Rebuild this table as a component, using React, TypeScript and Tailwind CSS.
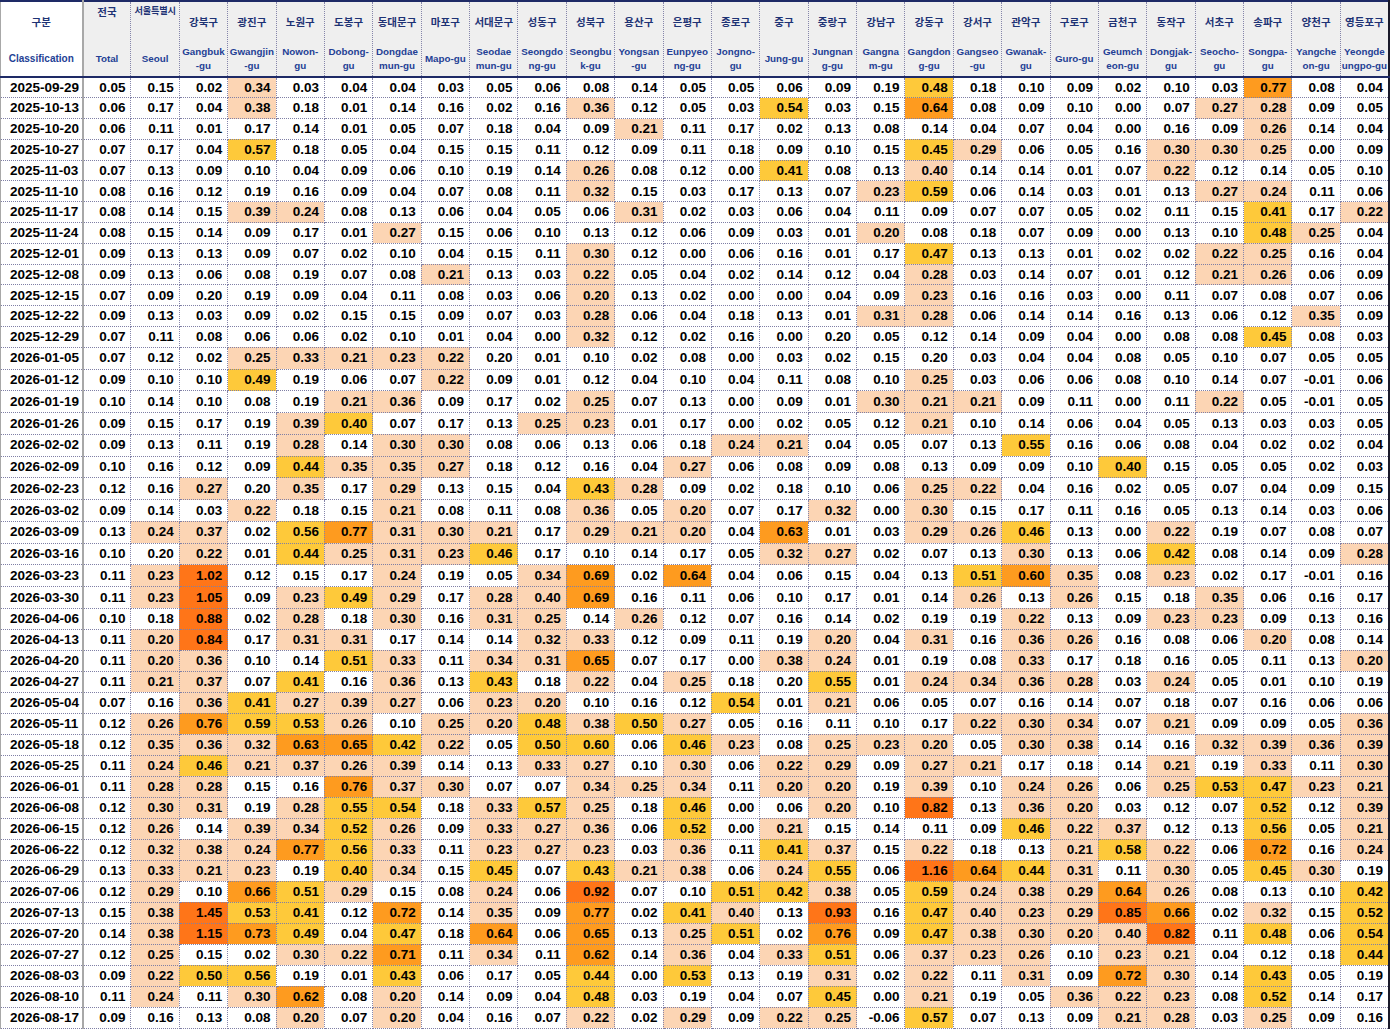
import React from "react";

type Head = { ko: string; en: string[]; top?: boolean };

const HEAD: Head[] = [
  { ko: "전국", en: ["Total"], top: true },
  { ko: "서울특별시", en: ["Seoul"], top: true },
  { ko: "강북구", en: ["Gangbuk", "-gu"] },
  { ko: "광진구", en: ["Gwangjin", "-gu"] },
  { ko: "노원구", en: ["Nowon-", "gu"] },
  { ko: "도봉구", en: ["Dobong-", "gu"] },
  { ko: "동대문구", en: ["Dongdae", "mun-gu"] },
  { ko: "마포구", en: ["Mapo-gu"] },
  { ko: "서대문구", en: ["Seodae", "mun-gu"] },
  { ko: "성동구", en: ["Seongdo", "ng-gu"] },
  { ko: "성북구", en: ["Seongbu", "k-gu"] },
  { ko: "용산구", en: ["Yongsan", "-gu"] },
  { ko: "은평구", en: ["Eunpyeo", "ng-gu"] },
  { ko: "종로구", en: ["Jongno-", "gu"] },
  { ko: "중구", en: ["Jung-gu"] },
  { ko: "중랑구", en: ["Jungnan", "g-gu"] },
  { ko: "강남구", en: ["Gangna", "m-gu"] },
  { ko: "강동구", en: ["Gangdon", "g-gu"] },
  { ko: "강서구", en: ["Gangseo", "-gu"] },
  { ko: "관악구", en: ["Gwanak-", "gu"] },
  { ko: "구로구", en: ["Guro-gu"] },
  { ko: "금천구", en: ["Geumch", "eon-gu"] },
  { ko: "동작구", en: ["Dongjak-", "gu"] },
  { ko: "서초구", en: ["Seocho-", "gu"] },
  { ko: "송파구", en: ["Songpa-", "gu"] },
  { ko: "양천구", en: ["Yangche", "on-gu"] },
  { ko: "영등포구", en: ["Yeongde", "ungpo-gu"] },
];

// a trailing "-" marks a value whose colour sits one step lower than its rounded value suggests
const DATA = `
2025-09-29|0.05 0.15 0.02 0.34 0.03 0.04 0.04 0.03 0.05 0.06 0.08 0.14 0.05 0.05 0.06 0.09 0.19 0.48 0.18 0.10 0.09 0.02 0.10 0.03 0.77 0.08 0.04
2025-10-13|0.06 0.17 0.04 0.38 0.18 0.01 0.14 0.16 0.02 0.16 0.36 0.12 0.05 0.03 0.54 0.03 0.15 0.64 0.08 0.09 0.10 0.00 0.07 0.27 0.28 0.09 0.05
2025-10-20|0.06 0.11 0.01 0.17 0.14 0.01 0.05 0.07 0.18 0.04 0.09 0.21 0.11 0.17 0.02 0.13 0.08 0.14 0.04 0.07 0.04 0.00 0.16 0.09 0.26 0.14 0.04
2025-10-27|0.07 0.17 0.04 0.57 0.18 0.05 0.04 0.15 0.15 0.11 0.12 0.09 0.11 0.18 0.09 0.10 0.15 0.45 0.29 0.06 0.05 0.16 0.30 0.30 0.25 0.00 0.09
2025-11-03|0.07 0.13 0.09 0.10 0.04 0.09 0.06 0.10 0.19 0.14 0.26 0.08 0.12 0.00 0.41 0.08 0.13 0.40- 0.14 0.14 0.01 0.07 0.22 0.12 0.14 0.05 0.10
2025-11-10|0.08 0.16 0.12 0.19 0.16 0.09 0.04 0.07 0.08 0.11 0.32 0.15 0.03 0.17 0.13 0.07 0.23 0.59 0.06 0.14 0.03 0.01 0.13 0.27 0.24 0.11 0.06
2025-11-17|0.08 0.14 0.15 0.39 0.24 0.08 0.13 0.06 0.04 0.05 0.06 0.31 0.02 0.03 0.06 0.04 0.11 0.09 0.07 0.07 0.05 0.02 0.11 0.15 0.41 0.17 0.22
2025-11-24|0.08 0.15 0.14 0.09 0.17 0.01 0.27 0.15 0.06 0.10 0.13 0.12 0.06 0.09 0.03 0.01 0.20 0.08 0.18 0.07 0.09 0.00 0.13 0.10 0.48 0.25 0.04
2025-12-01|0.09 0.13 0.13 0.09 0.07 0.02 0.10 0.04 0.15 0.11 0.30 0.12 0.00 0.06 0.16 0.01 0.17 0.47 0.13 0.13 0.01 0.02 0.02 0.22 0.25 0.16 0.04
2025-12-08|0.09 0.13 0.06 0.08 0.19 0.07 0.08 0.21 0.13 0.03 0.22 0.05 0.04 0.02 0.14 0.12 0.04 0.28 0.03 0.14 0.07 0.01 0.12 0.21 0.26 0.06 0.09
2025-12-15|0.07 0.09 0.20- 0.19 0.09 0.04 0.11 0.08 0.03 0.06 0.20 0.13 0.02 0.00 0.00 0.04 0.09 0.23 0.16 0.16 0.03 0.00 0.11 0.07 0.08 0.07 0.06
2025-12-22|0.09 0.13 0.03 0.09 0.02 0.15 0.15 0.09 0.07 0.03 0.28 0.06 0.04 0.18 0.13 0.01 0.31 0.28 0.06 0.14 0.14 0.16 0.13 0.06 0.12 0.35 0.09
2025-12-29|0.07 0.11 0.08 0.06 0.06 0.02 0.10 0.01 0.04 0.00 0.32 0.12 0.02 0.16 0.00 0.20- 0.05 0.12 0.14 0.09 0.04 0.00 0.08 0.08 0.45 0.08 0.03
2026-01-05|0.07 0.12 0.02 0.25 0.33 0.21 0.23 0.22 0.20- 0.01 0.10 0.02 0.08 0.00 0.03 0.02 0.15 0.20- 0.03 0.04 0.04 0.08 0.05 0.10 0.07 0.05 0.05
2026-01-12|0.09 0.10 0.10 0.49 0.19 0.06 0.07 0.22 0.09 0.01 0.12 0.04 0.10 0.04 0.11 0.08 0.10 0.25 0.03 0.06 0.06 0.08 0.10 0.14 0.07 -0.01 0.06
2026-01-19|0.10 0.14 0.10 0.08 0.19 0.21 0.36 0.09 0.17 0.02 0.25 0.07 0.13 0.00 0.09 0.01 0.30 0.21 0.21 0.09 0.11 0.00 0.11 0.22 0.05 -0.01 0.05
2026-01-26|0.09 0.15 0.17 0.19 0.39 0.40 0.07 0.17 0.13 0.25 0.23 0.01 0.17 0.00 0.02 0.05 0.12 0.21 0.10 0.14 0.06 0.04 0.05 0.13 0.03 0.03 0.05
2026-02-02|0.09 0.13 0.11 0.19 0.28 0.14 0.30 0.30 0.08 0.06 0.13 0.06 0.18 0.24 0.21 0.04 0.05 0.07 0.13 0.55 0.16 0.06 0.08 0.04 0.02 0.02 0.04
2026-02-09|0.10 0.16 0.12 0.09 0.44 0.35 0.35 0.27 0.18 0.12 0.16 0.04 0.27 0.06 0.08 0.09 0.08 0.13 0.09 0.09 0.10 0.40 0.15 0.05 0.05 0.02 0.03
2026-02-23|0.12 0.16 0.27 0.20- 0.35 0.17 0.29 0.13 0.15 0.04 0.43 0.28 0.09 0.02 0.18 0.10 0.06 0.25 0.22 0.04 0.16 0.02 0.05 0.07 0.04 0.09 0.15
2026-03-02|0.09 0.14 0.03 0.22 0.18 0.15 0.21 0.08 0.11 0.08 0.36 0.05 0.20 0.07 0.17 0.32 0.00 0.30 0.15 0.17 0.11 0.16 0.05 0.13 0.14 0.03 0.06
2026-03-09|0.13 0.24 0.37 0.02 0.56 0.77 0.31 0.30 0.21 0.17 0.29 0.21 0.20 0.04 0.63 0.01 0.03 0.29 0.26 0.46 0.13 0.00 0.22 0.19 0.07 0.08 0.07
2026-03-16|0.10 0.20- 0.22 0.01 0.44 0.25 0.31 0.23 0.46 0.17 0.10 0.14 0.17 0.05 0.32 0.27 0.02 0.07 0.13 0.30 0.13 0.06 0.42 0.08 0.14 0.09 0.28
2026-03-23|0.11 0.23 1.02 0.12 0.15 0.17 0.24 0.19 0.05 0.34 0.69 0.02 0.64 0.04 0.06 0.15 0.04 0.13 0.51 0.60 0.35 0.08 0.23 0.02 0.17 -0.01 0.16
2026-03-30|0.11 0.23 1.05 0.09 0.23 0.49 0.29 0.17 0.28 0.40- 0.69 0.16 0.11 0.06 0.10 0.17 0.01 0.14 0.26 0.13 0.26 0.15 0.18 0.35 0.06 0.16 0.17
2026-04-06|0.10 0.18 0.88 0.02 0.28 0.18 0.30 0.16 0.31 0.25 0.14 0.26 0.12 0.07 0.16 0.14 0.02 0.19 0.19 0.22 0.13 0.09 0.23 0.23 0.09 0.13 0.16
2026-04-13|0.11 0.20 0.84 0.17 0.31 0.31 0.17 0.14 0.14 0.32 0.33 0.12 0.09 0.11 0.19 0.20 0.04 0.31 0.16 0.36 0.26 0.16 0.08 0.06 0.20 0.08 0.14
2026-04-20|0.11 0.20 0.36 0.10 0.14 0.51 0.33 0.11 0.34 0.31 0.65 0.07 0.17 0.00 0.38 0.24 0.01 0.19 0.08 0.33 0.17 0.18 0.16 0.05 0.11 0.13 0.20
2026-04-27|0.11 0.21 0.37 0.07 0.41 0.16 0.36 0.13 0.43 0.18 0.22 0.04 0.25 0.18 0.20- 0.55 0.01 0.24 0.34 0.36 0.28 0.03 0.24 0.05 0.01 0.10 0.19
2026-05-04|0.07 0.16 0.36 0.41 0.27 0.39 0.27 0.06 0.23 0.20 0.10 0.16 0.12 0.54 0.01 0.21 0.06 0.05 0.07 0.16 0.14 0.07 0.18 0.07 0.16 0.06 0.06
2026-05-11|0.12 0.26 0.76 0.59 0.53 0.26 0.10 0.25 0.20 0.48 0.38 0.50 0.27 0.05 0.16 0.11 0.10 0.17 0.22 0.30 0.34 0.07 0.21 0.09 0.09 0.05 0.36
2026-05-18|0.12 0.35 0.36 0.32 0.63 0.65 0.42 0.22 0.05 0.50 0.60- 0.06 0.46 0.23 0.08 0.25 0.23 0.20 0.05 0.30 0.38 0.14 0.16 0.32 0.39 0.36 0.39
2026-05-25|0.11 0.24 0.46 0.21 0.37 0.26 0.39 0.14 0.13 0.33 0.27 0.10 0.30 0.06 0.22 0.29 0.09 0.27 0.21 0.17 0.18 0.14 0.21 0.19 0.33 0.11 0.30
2026-06-01|0.11 0.28 0.28 0.15 0.16 0.76 0.37 0.30 0.07 0.07 0.34 0.25 0.34 0.11 0.20 0.20 0.19 0.39 0.10 0.24 0.26 0.06 0.25 0.53 0.47 0.23 0.21
2026-06-08|0.12 0.30 0.31 0.19 0.28 0.55 0.54 0.18 0.33 0.57 0.25 0.18 0.46 0.00 0.06 0.20 0.10 0.82 0.13 0.36 0.20 0.03 0.12 0.07 0.52 0.12 0.39
2026-06-15|0.12 0.26 0.14 0.39 0.34 0.52 0.26 0.09 0.33 0.27 0.36 0.06 0.52 0.00 0.21 0.15 0.14 0.11 0.09 0.46 0.22 0.37 0.12 0.13 0.56 0.05 0.21
2026-06-22|0.12 0.32 0.38 0.24 0.77 0.56 0.33 0.11 0.23 0.27 0.23 0.03 0.36 0.11 0.41 0.37 0.15 0.22 0.18 0.13 0.21 0.58 0.22 0.06 0.72 0.16 0.24
2026-06-29|0.13 0.33 0.21 0.23 0.19 0.40 0.34 0.15 0.45 0.07 0.43 0.21 0.38 0.06 0.24 0.55 0.06 1.16 0.64 0.44 0.31 0.11 0.30 0.05 0.45 0.30 0.19
2026-07-06|0.12 0.29 0.10 0.66 0.51 0.29 0.15 0.08 0.24 0.06 0.92 0.07 0.10 0.51 0.42 0.38 0.05 0.59 0.24 0.38 0.29 0.64 0.26 0.08 0.13 0.10 0.42
2026-07-13|0.15 0.38 1.45 0.53 0.41 0.12 0.72 0.14 0.35 0.09 0.77 0.02 0.41 0.40- 0.13 0.93 0.16 0.47 0.40- 0.23 0.29 0.85 0.66 0.02 0.32 0.15 0.52
2026-07-20|0.14 0.38 1.15 0.73 0.49 0.04 0.47 0.18 0.64 0.06 0.65 0.13 0.25 0.51 0.02 0.76 0.09 0.47 0.38 0.30 0.20 0.40- 0.82 0.11 0.48 0.06 0.54
2026-07-27|0.12 0.25 0.15 0.02 0.30 0.22 0.71 0.11 0.34 0.11 0.62 0.14 0.36 0.04 0.33 0.51 0.06 0.37 0.23 0.26 0.10 0.23 0.21 0.04 0.12 0.18 0.44
2026-08-03|0.09 0.22 0.50 0.56 0.19 0.01 0.43 0.06 0.17 0.05 0.44 0.00 0.53 0.13 0.19 0.31 0.02 0.22 0.11 0.31 0.09 0.72 0.30 0.14 0.43 0.05 0.19
2026-08-10|0.11 0.24 0.11 0.30 0.62 0.08 0.20 0.14 0.09 0.04 0.48 0.03 0.19 0.04 0.07 0.45 0.00 0.21 0.19 0.05 0.36 0.22 0.23 0.08 0.52 0.14 0.17
2026-08-17|0.09 0.16 0.13 0.08 0.20 0.07 0.20 0.04 0.16 0.07 0.22 0.02 0.29 0.09 0.22 0.25 -0.06 0.57 0.07 0.13 0.09 0.21 0.28 0.03 0.25 0.09 0.16
`;

const BG = [
  "",
  "bg-[#fcd5b4]",
  "bg-[#fec93a]",
  "bg-[#fe9b1f]",
  "bg-[#ff7518]",
];

function parseCell(raw: string): { text: string; level: number } {
  const down = raw.endsWith("-");
  const text = down ? raw.slice(0, -1) : raw;
  const v = parseFloat(text);
  let level = v >= 0.8 ? 4 : v >= 0.6 ? 3 : v >= 0.4 ? 2 : v >= 0.2 ? 1 : 0;
  if (down) level -= 1;
  return { text, level };
}

const ROWS = DATA.trim()
  .split("\n")
  .map((line) => {
    const [date, vals] = line.split("|");
    return { date: date.trim(), cells: vals.trim().split(/\s+/).map(parseCell) };
  });

const KO = "font-['Noto_Sans_CJK_KR','Noto_Sans',sans-serif]";

export default function App() {
  const last = HEAD.length - 1;
  return (
    <div className="w-[1393px] min-h-[1032px] bg-white font-['Liberation_Sans',Arial,sans-serif]">
      <table className="table-fixed border-collapse w-[1390px]">
        <colgroup>
          <col className="w-[82px]" />
          {HEAD.map((_, i) => (
            <col key={i} className="w-[48.37px]" />
          ))}
        </colgroup>
        <thead>
          <tr>
            <th className="p-0 align-top bg-white border-t-2 border-b-2 border-l border-r-2 border-solid border-t-[#1e2a66] border-b-[#1e2a66] border-l-[#a8a8a8] border-r-[#a8a8a8]">
              <div className="h-[74px] flex flex-col">
                <div className={`h-[39px] flex items-center justify-center text-[10.5px] font-bold text-[#1e3375] ${KO}`}>
                  구분
                </div>
                <div className="flex-1 flex items-center justify-center text-[10px] font-bold text-[#243f95]">
                  Classification
                </div>
              </div>
            </th>
            {HEAD.map((h, i) => (
              <th
                key={h.ko}
                className={`p-0 align-top bg-[#efefef] border-t-2 border-b-2 border-t-[#1e2a66] border-b-[#1e2a66] [border-top-style:solid] [border-bottom-style:solid] ${
                  i === last
                    ? "border-r-2 border-r-[#1a1a2a] [border-right-style:solid]"
                    : "border-r border-r-[#8585aa] [border-right-style:dotted]"
                }`}
              >
                <div className="h-[74px] flex flex-col overflow-hidden">
                  <div
                    className={`h-[39px] flex justify-center whitespace-nowrap font-bold text-[#1e3375] ${KO} ${
                      h.top ? "items-start pt-[2px]" : "items-center"
                    } ${h.ko.length > 4 ? "text-[9.2px] tracking-[-0.2px]" : "text-[10.5px]"}`}
                  >
                    {h.ko}
                  </div>
                  <div className="flex-1 flex flex-col items-center justify-center text-[9.8px] leading-[14px] font-bold text-[#243f95] whitespace-nowrap">
                    {h.en.map((e) => (
                      <span key={e}>{e}</span>
                    ))}
                  </div>
                </div>
              </th>
            ))}
          </tr>
        </thead>
        <tbody>
          {ROWS.map((r, ri) => (
            <tr
              key={r.date}
              className={ri < 13 ? "h-[20.8px]" : ri < 25 ? "h-[21.75px]" : "h-[21px]"}
            >
              <td className="p-0 pl-[9px] text-left text-[13.5px] font-bold text-black leading-none whitespace-nowrap border-l border-b border-r-2 border-l-[#a8a8a8] border-r-[#a8a8a8] border-b-[#7f7fa5] [border-left-style:solid] [border-right-style:solid] [border-bottom-style:dotted]">
                {r.date}
              </td>
              {r.cells.map((c, ci) => (
                <td
                  key={ci}
                  className={`p-0 pr-[5px] text-right text-[13.5px] font-bold text-black leading-none whitespace-nowrap border-b border-b-[#7f7fa5] [border-bottom-style:dotted] ${BG[c.level]} ${
                    ci === last
                      ? "border-r-2 border-r-[#1a1a2a] [border-right-style:solid]"
                      : "border-r border-r-[#8585aa] [border-right-style:dotted]"
                  }`}
                >
                  {c.text}
                </td>
              ))}
            </tr>
          ))}
        </tbody>
      </table>
    </div>
  );
}
